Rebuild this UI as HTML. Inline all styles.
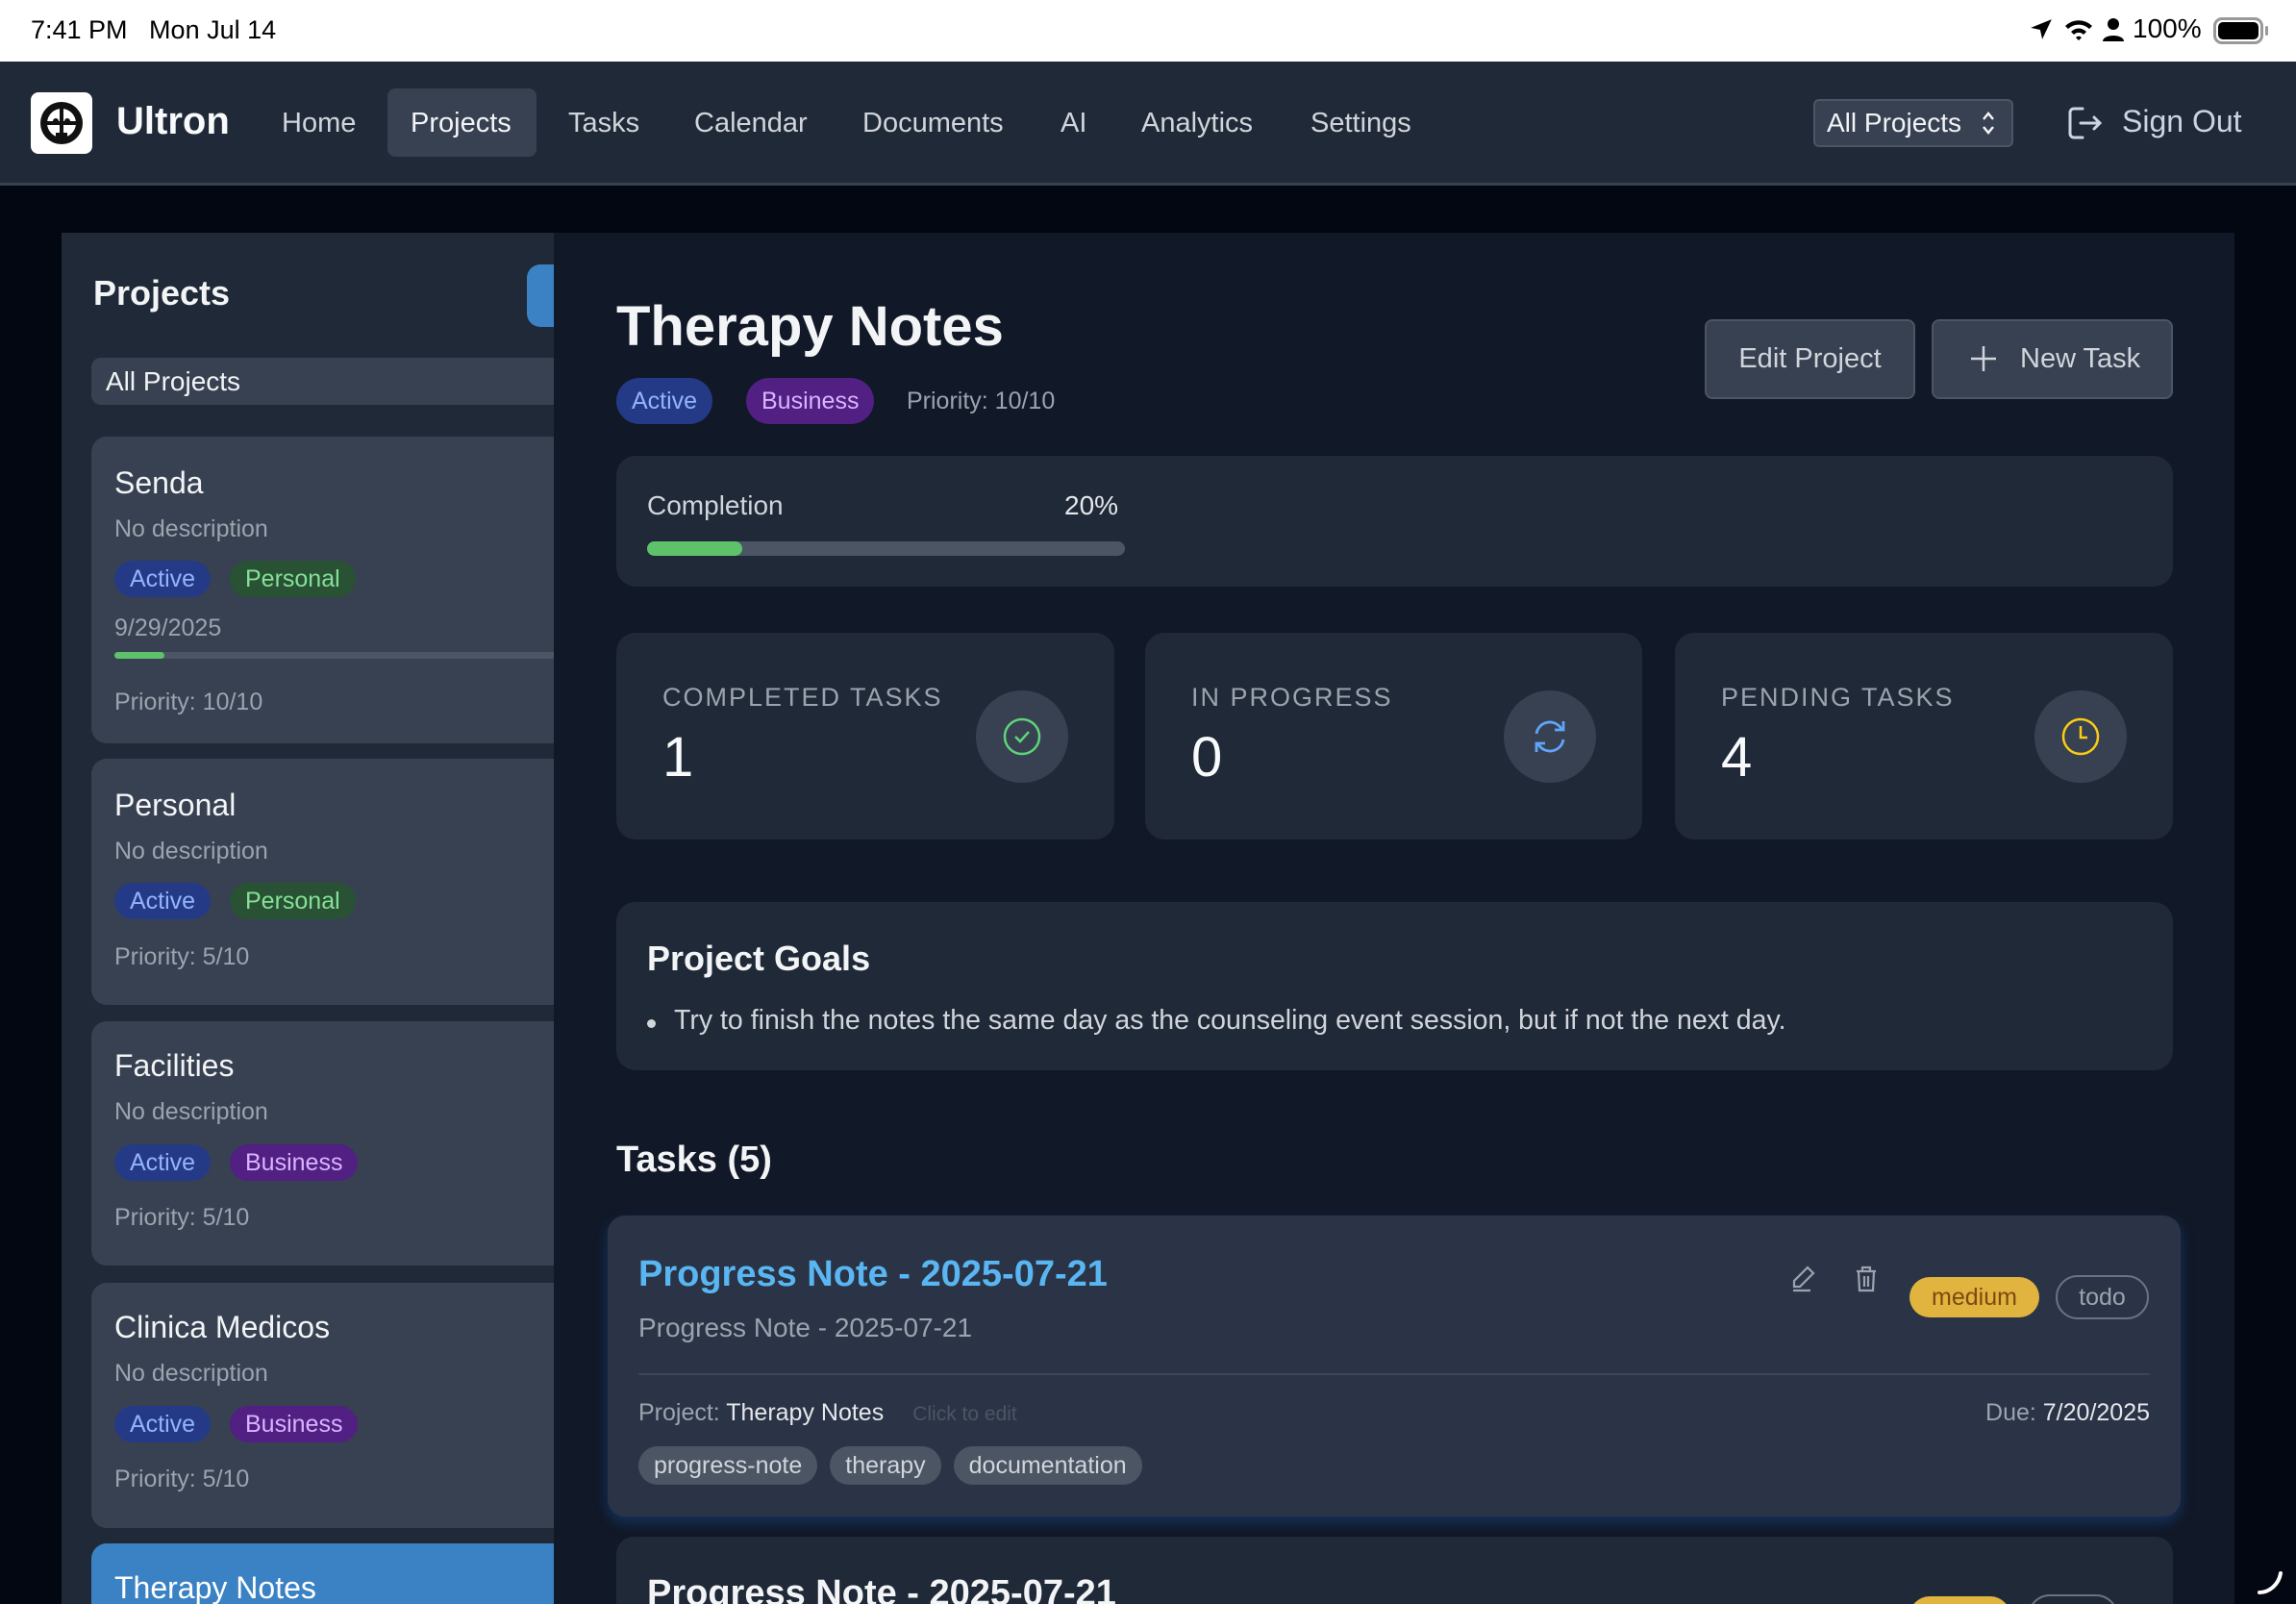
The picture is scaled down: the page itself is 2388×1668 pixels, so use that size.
<!DOCTYPE html>
<html><head><meta charset="utf-8"><style>
*{margin:0;padding:0;box-sizing:border-box}
html{width:2388px;height:1668px;overflow:hidden}
body{width:2388px;height:1668px;overflow:hidden;background:#030712;font-family:"Liberation Sans",sans-serif;position:relative}
.a{position:absolute;white-space:nowrap}
.sb{top:0;left:0;width:2388px;height:64px;background:#fff}
.nav{top:64px;left:0;width:2388px;height:129px;background:#1f2937;border-bottom:3px solid #374151}
.ni{color:#d1d5db;font-size:29px;top:112px}
.side{left:64px;top:242px;width:512px;height:1426px;background:#1f2937;overflow:hidden}
.main{left:576px;top:242px;width:1748px;height:1426px;background:#111827;overflow:hidden}
.card{position:absolute;left:31px;width:520px;background:#374151;border-radius:16px}
.badge{position:absolute;height:38px;line-height:38px;border-radius:19px;font-size:25px;padding:0 16px}
.act{background:#253a86;color:#93b4fa}
.per{background:#285233;color:#86e09a}
.bus{background:#521f82;color:#d8b4fe}
.cn{position:absolute;left:24px;color:#f3f4f6;font-size:32px}
.cd{position:absolute;left:24px;color:#9ca3af;font-size:25px}
.box{position:absolute;background:#1f2937;border-radius:20px}
.sl{position:absolute;left:48px;top:52px;color:#9ca3af;font-size:27px;letter-spacing:2px}
.sn{position:absolute;left:48px;top:96px;color:#f9fafb;font-size:58px}
.ic{position:absolute;right:48px;top:60px;width:96px;height:96px;border-radius:50%;background:#374151;display:flex;align-items:center;justify-content:center}
.tags{position:absolute;left:32px;top:240px;display:flex;gap:13px}
.tag{height:40px;line-height:40px;border-radius:20px;background:#4b5563;color:#d1d5db;font-size:25px;padding:0 16px}
</style></head><body>
<div class="a sb"></div>
<div class="a" style="left:32px;top:16px;font-size:27px;color:#000">7:41 PM&nbsp;&nbsp;&nbsp;Mon Jul 14</div>
<svg class="a" style="left:2110px;top:18px" width="26" height="26" viewBox="0 0 24 24"><path d="M22 2 2 10l9 2 2 9z" fill="#000"/></svg>
<svg class="a" style="left:2146px;top:18px" width="32" height="26" viewBox="0 0 32 26"><path d="M2 9a20 20 0 0 1 28 0l-3 3a16 16 0 0 0-22 0zM8 15a11 11 0 0 1 16 0l-3 3a7 7 0 0 0-10 0zM13 21a4 4 0 0 1 6 0l-3 3z" fill="#000"/></svg>
<svg class="a" style="left:2186px;top:18px" width="24" height="26" viewBox="0 0 24 26"><circle cx="12" cy="7" r="6" fill="#000"/><path d="M1 25c0-8 22-8 22 0z" fill="#000"/></svg>
<div class="a" style="left:2218px;top:14px;font-size:28px;color:#000">100%</div>
<div class="a" style="left:2302px;top:18px;width:52px;height:28px;border:3px solid #999;border-radius:9px;padding:2px"><div style="width:100%;height:100%;background:#000;border-radius:5px"></div></div>
<div class="a" style="left:2356px;top:27px;width:3px;height:10px;background:#999;border-radius:2px"></div>

<div class="a nav"></div>
<div class="a" style="left:32px;top:96px;width:64px;height:64px;background:#fff;border-radius:8px"></div>
<svg class="a" style="left:36px;top:100px" width="56" height="56" viewBox="0 0 56 56"><circle cx="28" cy="28" r="22" fill="#111"/><circle cx="28" cy="28" r="15" fill="#fff"/><path d="M28 10v36M10 28h36" stroke="#111" stroke-width="4"/><circle cx="22" cy="26" r="3" fill="#111"/><circle cx="34" cy="26" r="3" fill="#111"/><path d="M22 38h12v6H22z" fill="#111"/></svg>
<div class="a" style="left:121px;top:104px;font-size:40px;font-weight:bold;color:#f9fafb">Ultron</div>
<div class="a ni" style="left:293px">Home</div>
<div class="a" style="left:403px;top:92px;width:155px;height:71px;background:#374151;border-radius:8px"></div>
<div class="a ni" style="left:427px;color:#f3f4f6">Projects</div>
<div class="a ni" style="left:591px">Tasks</div>
<div class="a ni" style="left:722px">Calendar</div>
<div class="a ni" style="left:897px">Documents</div>
<div class="a ni" style="left:1103px">AI</div>
<div class="a ni" style="left:1187px">Analytics</div>
<div class="a ni" style="left:1363px">Settings</div>
<div class="a" style="left:1886px;top:103px;width:208px;height:50px;background:#374151;border:2px solid #4b5563;border-radius:6px;color:#f3f4f6;font-size:28px;line-height:46px;padding-left:12px">All Projects</div>
<svg class="a" style="left:2060px;top:114px" width="16" height="28" viewBox="0 0 16 28"><path d="M3 10l5-6 5 6M3 18l5 6 5-6" stroke="#f3f4f6" stroke-width="2.5" fill="none"/></svg>
<svg class="a" style="left:2150px;top:110px" width="38" height="36" viewBox="0 0 38 36"><path d="M16 3H7a4 4 0 0 0-4 4v22a4 4 0 0 0 4 4h9M14 18h20M28 12l6 6-6 6" stroke="#cbd5e1" stroke-width="3" fill="none" stroke-linecap="round"/></svg>
<div class="a" style="left:2207px;top:108px;font-size:32px;color:#cbd5e1">Sign Out</div>

<div class="a side">
 <div class="a" style="left:33px;top:42px;font-size:36px;font-weight:600;color:#f3f4f6">Projects</div>
 <div class="a" style="left:484px;top:33px;width:60px;height:65px;background:#3b82c4;border-radius:14px"></div>
 <div class="a" style="left:31px;top:130px;width:520px;height:49px;background:#374151;border-radius:10px;color:#f3f4f6;font-size:28px;line-height:49px;padding-left:15px">All Projects</div>
 <div class="card" style="top:212px;height:319px">
  <div class="cn" style="top:30px">Senda</div><div class="cd" style="top:82px">No description</div>
  <div class="badge act" style="left:24px;top:129px">Active</div><div class="badge per" style="left:144px;top:129px">Personal</div>
  <div class="cd" style="top:185px">9/29/2025</div>
  <div class="a" style="left:24px;top:224px;width:500px;height:7px;background:#4b5563;border-radius:4px"><div style="width:52px;height:7px;background:#5ec26a;border-radius:4px"></div></div>
  <div class="cd" style="top:262px">Priority: 10/10</div>
 </div>
 <div class="card" style="top:547px;height:256px">
  <div class="cn" style="top:30px">Personal</div><div class="cd" style="top:82px">No description</div>
  <div class="badge act" style="left:24px;top:129px">Active</div><div class="badge per" style="left:144px;top:129px">Personal</div>
  <div class="cd" style="top:192px">Priority: 5/10</div>
 </div>
 <div class="card" style="top:820px;height:254px">
  <div class="cn" style="top:28px">Facilities</div><div class="cd" style="top:80px">No description</div>
  <div class="badge act" style="left:24px;top:128px">Active</div><div class="badge bus" style="left:144px;top:128px">Business</div>
  <div class="cd" style="top:190px">Priority: 5/10</div>
 </div>
 <div class="card" style="top:1092px;height:255px">
  <div class="cn" style="top:28px">Clinica Medicos</div><div class="cd" style="top:80px">No description</div>
  <div class="badge act" style="left:24px;top:128px">Active</div><div class="badge bus" style="left:144px;top:128px">Business</div>
  <div class="cd" style="top:190px">Priority: 5/10</div>
 </div>
 <div class="card" style="top:1363px;height:200px;background:#3b82c4">
  <div class="cn" style="top:28px;color:#fff">Therapy Notes</div>
 </div>
</div>

<div class="a main">
 <div class="a" style="left:65px;top:64px;font-size:58px;font-weight:bold;color:#f3f4f6">Therapy Notes</div>
 <div class="badge act" style="left:65px;top:151px;height:48px;line-height:48px;border-radius:24px;font-size:25px">Active</div>
 <div class="badge bus" style="left:200px;top:151px;height:48px;line-height:48px;border-radius:24px;font-size:25px">Business</div>
 <div class="a" style="left:367px;top:161px;font-size:25px;color:#9ca3af">Priority: 10/10</div>
 <div class="a" style="left:1197px;top:90px;width:219px;height:83px;background:#374151;border:2px solid #4b5563;border-radius:8px;color:#d1d5db;font-size:29px;line-height:79px;text-align:center">Edit Project</div>
 <div class="a" style="left:1433px;top:90px;width:251px;height:83px;background:#374151;border:2px solid #4b5563;border-radius:8px;color:#d1d5db;font-size:29px;line-height:79px;padding-left:90px">New Task</div>
 <svg class="a" style="left:1472px;top:116px" width="30" height="30" viewBox="0 0 30 30"><path d="M15 2v26M2 15h26" stroke="#d1d5db" stroke-width="2.5"/></svg>

 <div class="box" style="left:65px;top:232px;width:1619px;height:136px">
  <div class="a" style="left:32px;top:36px;font-size:28px;color:#d1d5db">Completion</div>
  <div class="a" style="left:466px;top:36px;font-size:28px;color:#e5e7eb">20%</div>
  <div class="a" style="left:32px;top:89px;width:497px;height:15px;background:#4b5563;border-radius:8px"><div style="width:99px;height:15px;background:#5ec26a;border-radius:8px"></div></div>
 </div>

 <div class="box" style="left:65px;top:416px;width:518px;height:215px"><div class="sl">COMPLETED TASKS</div><div class="sn">1</div>
  <div class="ic"><svg width="44" height="44" viewBox="0 0 44 44"><circle cx="22" cy="22" r="18" stroke="#5ed47a" stroke-width="2.5" fill="none"/><path d="M15 22l5 5 9-10" stroke="#5ed47a" stroke-width="2.5" fill="none"/></svg></div></div>
 <div class="box" style="left:615px;top:416px;width:517px;height:215px"><div class="sl">IN PROGRESS</div><div class="sn">0</div>
  <div class="ic"><svg width="44" height="44" viewBox="0 0 44 44"><path d="M8 19a14 14 0 0 1 26-5M36 25a14 14 0 0 1-26 5" stroke="#60a5fa" stroke-width="2.8" fill="none"/><path d="M36 6v9h-9M8 38v-9h9" stroke="#60a5fa" stroke-width="2.8" fill="none"/></svg></div></div>
 <div class="box" style="left:1166px;top:416px;width:518px;height:215px"><div class="sl">PENDING TASKS</div><div class="sn">4</div>
  <div class="ic"><svg width="44" height="44" viewBox="0 0 44 44"><circle cx="22" cy="22" r="18" stroke="#facc15" stroke-width="2.5" fill="none"/><path d="M22 11v12h7" stroke="#facc15" stroke-width="2.5" fill="none"/></svg></div></div>

 <div class="box" style="left:65px;top:696px;width:1619px;height:175px">
  <div class="a" style="left:32px;top:38px;font-size:36px;font-weight:600;color:#f3f4f6">Project Goals</div>
  <div class="a" style="left:32px;top:122px;width:9px;height:9px;border-radius:50%;background:#d1d5db"></div>
  <div class="a" style="left:60px;top:107px;font-size:28.5px;color:#d1d5db">Try to finish the notes the same day as the counseling event session, but if not the next day.</div>
 </div>

 <div class="a" style="left:65px;top:943px;font-size:38px;font-weight:600;color:#f3f4f6">Tasks (5)</div>

 <div class="a" style="left:56px;top:1022px;width:1636px;height:313px;background:#2a3446;border-radius:18px;box-shadow:0 6px 14px rgba(30,100,200,.35)">
  <div class="a" style="left:32px;top:40px;font-size:38px;font-weight:600;color:#5ab6f2">Progress Note - 2025-07-21</div>
  <div class="a" style="left:32px;top:101px;font-size:28px;color:#9ca3af">Progress Note - 2025-07-21</div>
  <svg class="a" style="left:1228px;top:50px" width="30" height="32" viewBox="0 0 30 32"><path d="M20 4l6 6-14 14H6v-6zM5 28h18" stroke="#9ca3af" stroke-width="2.2" fill="none"/></svg>
  <svg class="a" style="left:1296px;top:50px" width="26" height="32" viewBox="0 0 26 32"><path d="M3 8h20M9 8V4h8v4M5 8l1 20h14l1-20M11 13v11M15 13v11" stroke="#9ca3af" stroke-width="2.2" fill="none"/></svg>
  <div class="a" style="left:1354px;top:64px;width:135px;height:42px;border-radius:21px;background:#e0b43e;color:#7c4a10;font-size:25px;line-height:42px;text-align:center">medium</div>
  <div class="a" style="left:1506px;top:62px;width:97px;height:46px;border-radius:23px;border:2px solid #6b7280;color:#9ca3af;font-size:25px;line-height:42px;text-align:center">todo</div>
  <div class="a" style="left:32px;top:164px;width:1572px;height:2px;background:#3b4556"></div>
  <div class="a" style="left:32px;top:191px;font-size:25px;color:#9ca3af">Project: <span style="color:#e5e7eb">Therapy Notes</span><span style="color:#4b5563;font-size:21px;margin-left:30px">Click to edit</span></div>
  <div class="a" style="right:32px;top:191px;font-size:25px;color:#9ca3af">Due: <span style="color:#e5e7eb">7/20/2025</span></div>
  <div class="tags"><div class="tag">progress-note</div><div class="tag">therapy</div><div class="tag">documentation</div></div>
 </div>

 <div class="a" style="left:65px;top:1356px;width:1619px;height:70px;background:#1f2937;border-radius:18px 18px 0 0">
  <div class="a" style="left:32px;top:38px;font-size:38px;font-weight:600;color:#f3f4f6">Progress Note - 2025-07-21</div>
  <div class="a" style="left:1345px;top:62px;width:105px;height:42px;border-radius:21px;background:#e0b43e"></div>
  <div class="a" style="left:1468px;top:60px;width:94px;height:46px;border-radius:23px;border:2px solid #6b7280"></div>
 </div>
</div>
<svg class="a" style="left:2346px;top:1630px" width="30" height="30" viewBox="0 0 30 30"><path d="M4 26c10 0 20-8 22-20" stroke="#fff" stroke-width="4" fill="none" stroke-linecap="round"/></svg>
</body></html>
